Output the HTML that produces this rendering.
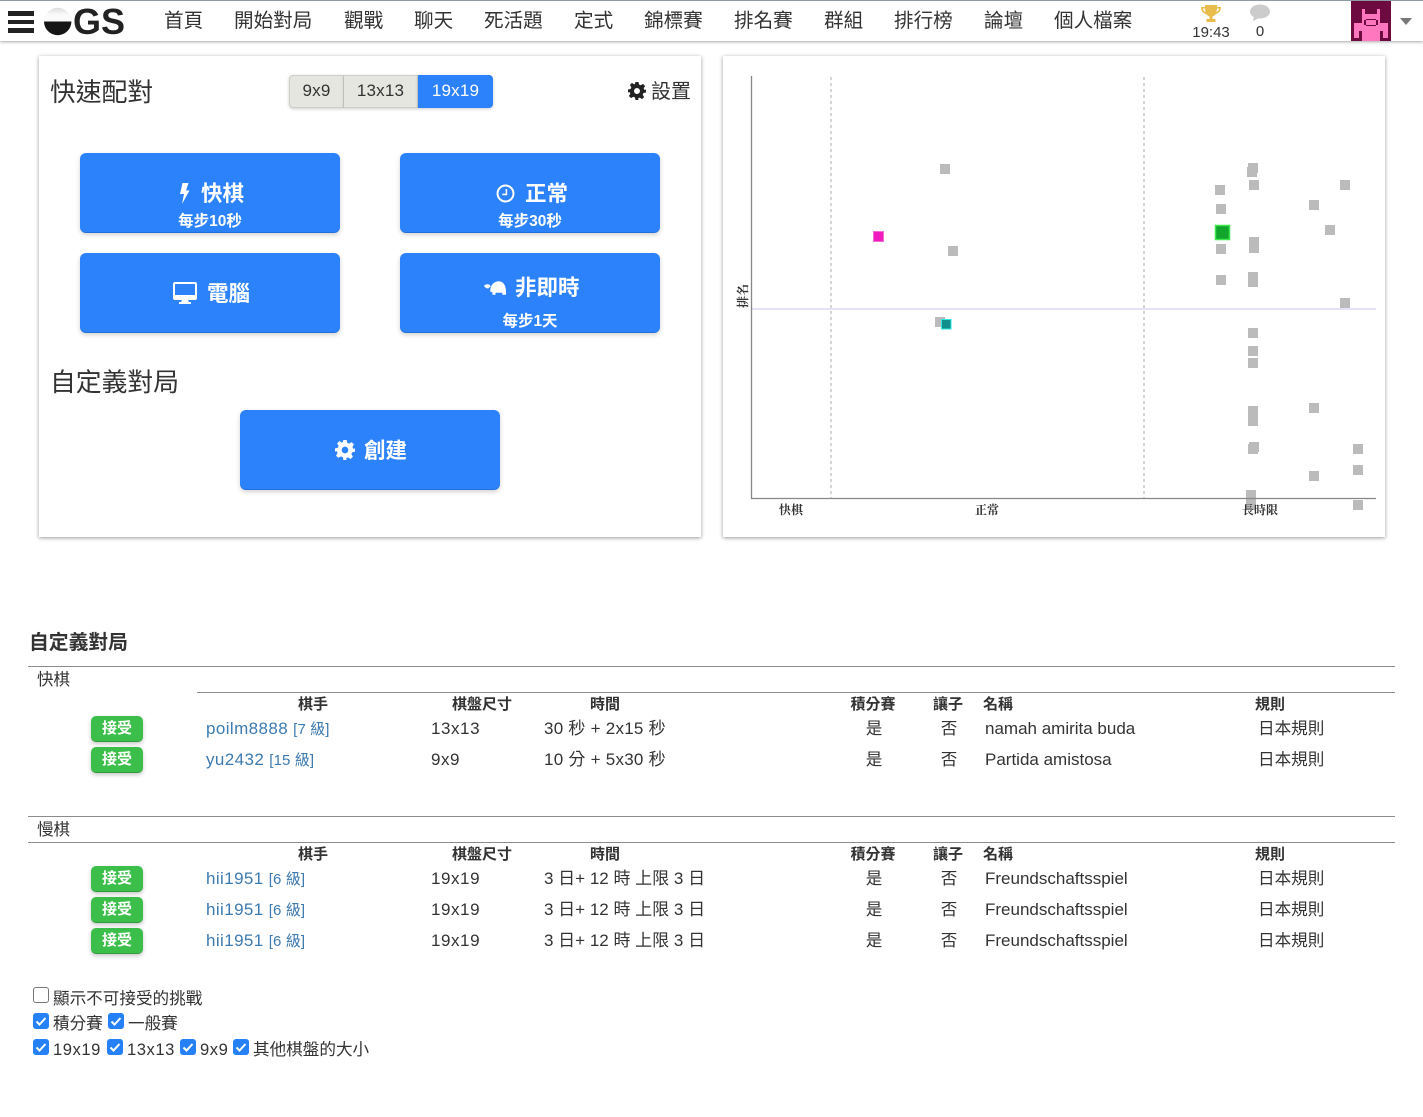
<!DOCTYPE html>
<html lang="zh-TW">
<head>
<meta charset="utf-8">
<title>OGS</title>
<style>
html,body{margin:0;padding:0;background:#fff;}
body{width:1423px;height:1117px;position:relative;overflow:hidden;font-family:"Liberation Sans","Noto Sans CJK TC",sans-serif;color:#333;}
.t{position:absolute;white-space:nowrap;line-height:20px;}
.c{transform:translateX(-50%);text-align:center;}
#hdr{position:absolute;left:0;top:0;width:1423px;height:41px;background:#fff;border-top:1px solid #8d9ca3;box-sizing:border-box;box-shadow:0 1px 3px rgba(0,0,0,.35);}
.nav{font-size:19.6px;top:11px;color:#333;}
.card{position:absolute;background:#fff;box-shadow:0 1px 4px rgba(0,0,0,.4);}
.btn{position:absolute;width:260px;height:80px;background:#2c82fb;border-radius:6px;border-bottom:1px solid #2470db;box-sizing:border-box;box-shadow:0 2px 5px rgba(0,0,0,.18);color:#fff;font-weight:bold;}
.btn .t{color:#fff;}
.seg{position:absolute;top:75px;height:33px;box-sizing:border-box;background:#e6e6e0;color:#333;font-size:17px;line-height:30px;text-align:center;border:1px solid #cfcfc8;box-shadow:0 1px 3px rgba(0,0,0,.2);letter-spacing:.2px;}
.hr{position:absolute;height:1px;background:#8c8c8c;}
.th{font-size:15px;font-weight:bold;color:#333;}
.td{font-size:17px;color:#333;}
.n{letter-spacing:.55px;}
.m{letter-spacing:.25px;}
.r{font-size:16.6px;}
.name{font-size:17px;color:#3d7ab0;letter-spacing:.4px;}
.name small{font-size:15px;letter-spacing:.1px;}
.ok{position:absolute;left:91px;width:52px;height:26px;background:#3cbf4a;border-radius:5px;border-bottom:1px solid #2f9a3b;box-sizing:border-box;color:#fff;font-size:15px;font-weight:bold;text-align:center;line-height:25px;box-shadow:0 2px 4px rgba(0,0,0,.22);}
.cb{position:absolute;width:16px;height:16px;border-radius:3px;background:#2680f8;}
.cb svg{display:block;}
.cb.off{background:#fff;border:1px solid #767676;box-sizing:border-box;}
</style>
</head>
<body>

<div id="hdr"></div>

<!-- hamburger -->
<div style="position:absolute;left:8px;top:11px;width:26px;height:5px;background:#222"></div>
<div style="position:absolute;left:8px;top:20px;width:26px;height:4px;background:#222"></div>
<div style="position:absolute;left:8px;top:28px;width:26px;height:5px;background:#222"></div>

<!-- logo -->
<svg style="position:absolute;left:43px;top:7px" width="30" height="30" viewBox="0 0 30 30">
<defs><linearGradient id="lg" x1="0" y1="0" x2="0" y2="1"><stop offset="0" stop-color="#dcdcdc"/><stop offset=".5" stop-color="#fafafa"/></linearGradient></defs>
<path d="M1 14.500a13.700 13.700 0 0 1 27.400 0z" fill="url(#lg)"/>
<path d="M1 14.500a13.700 13.700 0 0 0 27.400 0z" fill="#161616"/>
</svg>
<div class="t" style="left:73px;top:6px;font-size:36px;line-height:32px;font-weight:bold;color:#222;">GS</div>

<!-- nav -->
<div class="t nav" style="left:164px">首頁</div>
<div class="t nav" style="left:234px">開始對局</div>
<div class="t nav" style="left:344px">觀戰</div>
<div class="t nav" style="left:414px">聊天</div>
<div class="t nav" style="left:484px">死活題</div>
<div class="t nav" style="left:574px">定式</div>
<div class="t nav" style="left:644px">錦標賽</div>
<div class="t nav" style="left:734px">排名賽</div>
<div class="t nav" style="left:824px">群組</div>
<div class="t nav" style="left:894px">排行榜</div>
<div class="t nav" style="left:984px">論壇</div>
<div class="t nav" style="left:1054px">個人檔案</div>

<!-- trophy -->
<svg style="position:absolute;left:1200px;top:4px" width="22" height="19" viewBox="0 0 22 19">
<path d="M5 1h12v2h4c0 4-2 6-5 7-1 1.500-2.500 2-3.500 2.500V15h3v3H6.500v-3h3v-2.500C8.500 12 7 11.500 6 10 3 9 1 7 1 3h4z" fill="#e8bd4e"/>
<path d="M3 4.500h2l.5 3.500C4 7.500 3.200 6 3 4.500zM19 4.500h-2L16.500 8c1.500-.5 2.300-2 2.500-3.500z" fill="#fff"/>
</svg>
<div class="t c" style="left:1211px;top:23px;font-size:15px;color:#333">19:43</div>

<!-- chat -->
<svg style="position:absolute;left:1249px;top:4px" width="22" height="19" viewBox="0 0 22 19">
<ellipse cx="11" cy="7.500" rx="10" ry="7" fill="#ccc"/>
<path d="M5 12L4 17l6-3z" fill="#ccc"/>
</svg>
<div class="t c" style="left:1260px;top:22px;font-size:15px;color:#333">0</div>

<!-- avatar -->
<svg style="position:absolute;left:1351px;top:1px" width="40" height="40" viewBox="0 0 40 40" shape-rendering="crispEdges">
<rect width="40" height="40" fill="#6d0a40"/>
<path fill="#ff78bf" d="M11 8h3v5h12V8h3v10h-18zM11 18h18v8H11zM3 22h34v8H3zM3 30h5v7H3zM32 30h5v7h-5zM11 26h18v14H11z"/>
<path fill="#6d0a40" d="M15 18h10v1H15zM15 24h10v1H15zM13 19h2v5h-2zM25 19h2v5h-2z"/>
</svg>
<svg style="position:absolute;left:1400px;top:18px" width="12" height="7" viewBox="0 0 12 7"><path d="M0 0h12L6 7z" fill="#777"/></svg>

<!-- left card -->
<div class="card" style="left:39px;top:56px;width:662px;height:481px"></div>
<div class="t" style="left:50px;top:78px;font-size:25.800px;line-height:30px;color:#333">快速配對</div>

<div class="seg" style="left:289px;width:55px;border-radius:4px 0 0 4px">9x9</div>
<div class="seg" style="left:344px;width:74px;border-left:0">13x13</div>
<div class="seg" style="left:418px;width:75px;background:#2c82fb;color:#fff;border-color:#2c82fb;border-radius:0 4px 4px 0">19x19</div>

<svg style="position:absolute;left:628px;top:82px" width="18" height="18" viewBox="0 0 24 24">
<path fill="#222" fill-rule="evenodd" d="M10 0h4l.7 3.400 2.300 1 3-1.900 2.800 2.800-1.900 3 1 2.300L24 10v4l-3.400.7-1 2.300 1.900 3-2.800 2.800-3-1.900-2.300 1L14 24h-4l-.7-3.400-2.300-1-3 1.900-2.800-2.800 1.900-3-1-2.300L0 14v-4l3.400-.7 1-2.300-1.900-3L5.300 1.200l3 1.900 1-.7zM12 8a4 4 0 1 0 0 8 4 4 0 0 0 0-8z"/>
</svg>
<div class="t" style="left:651px;top:82px;font-size:20px;color:#333">設置</div>

<!-- buttons -->
<div class="btn" style="left:80px;top:153px">
  <svg style="position:absolute;left:99px;top:30px" width="11" height="21" viewBox="0 0 11 21"><path d="M3.500 0h6L7 7.500h3.500L3 21l2-10H1z" fill="#fff"/></svg>
  <div class="t" style="left:121px;top:28px;font-size:21.500px;line-height:26px">快棋</div>
  <div class="t c" style="left:130px;top:58px;font-size:15.500px;line-height:22px">每步10秒</div>
</div>
<div class="btn" style="left:400px;top:153px">
  <svg style="position:absolute;left:96px;top:31px" width="19" height="19" viewBox="0 0 21 21"><circle cx="10.500" cy="10.500" r="8.800" fill="none" stroke="#fff" stroke-width="2.200"/><path d="M11.500 5.500v6h-4.500" fill="none" stroke="#fff" stroke-width="1.800"/></svg>
  <div class="t" style="left:125px;top:28px;font-size:21.500px;line-height:26px">正常</div>
  <div class="t c" style="left:130px;top:58px;font-size:15.500px;line-height:22px">每步30秒</div>
</div>
<div class="btn" style="left:80px;top:253px">
  <svg style="position:absolute;left:93px;top:29px" width="24" height="22" viewBox="0 0 24 22"><path fill="#fff" fill-rule="evenodd" d="M2 0h20a2 2 0 0 1 2 2v14a2 2 0 0 1-2 2h-7l1 2h2v2H6v-2h2l1-2H2a2 2 0 0 1-2-2V2a2 2 0 0 1 2-2zM2 2v11h20V2z"/></svg>
  <div class="t" style="left:127px;top:28px;font-size:21.500px;line-height:26px">電腦</div>
</div>
<div class="btn" style="left:400px;top:253px">
  <svg style="position:absolute;left:84px;top:28px" width="22" height="14" viewBox="0 0 21 13"><path fill="#fff" d="M0 4.500C1 3 3.500 2.500 5 3.200L6.500 5 4 7C2 7 .8 5.800 0 4.500zM6 9c0-5 3.500-9 8-9s7 4 7 10v3h-3.500v-2h-6.500v2H8v-2.500L6 10z"/></svg>
  <div class="t" style="left:115px;top:22px;font-size:21.500px;line-height:26px">非即時</div>
  <div class="t c" style="left:130px;top:58px;font-size:15.500px;line-height:22px">每步1天</div>
</div>

<div class="t" style="left:50px;top:368px;font-size:25.800px;line-height:30px;color:#333">自定義對局</div>

<div class="btn" style="left:240px;top:410px">
  <svg style="position:absolute;left:95px;top:30px" width="20" height="20" viewBox="0 0 24 24">
  <path fill="#fff" fill-rule="evenodd" d="M10 0h4l.7 3.400 2.300 1 3-1.900 2.800 2.800-1.900 3 1 2.300L24 10v4l-3.400.7-1 2.300 1.900 3-2.800 2.800-3-1.900-2.300 1L14 24h-4l-.7-3.400-2.300-1-3 1.900-2.800-2.800 1.900-3-1-2.300L0 14v-4l3.400-.7 1-2.300-1.900-3L5.300 1.200l3 1.900 1-.7zM12 8a4 4 0 1 0 0 8 4 4 0 0 0 0-8z"/>
  </svg>
  <div class="t" style="left:124px;top:28px;font-size:21.500px;line-height:26px">創建</div>
</div>

<!-- right card with chart -->
<div class="card" style="left:723px;top:56px;width:662px;height:481px"></div>
<svg style="position:absolute;left:0;top:0" width="1423" height="540" viewBox="0 0 1423 540">
<g fill="#bbb">
<rect x="940" y="164" width="10" height="10"/>
<rect x="948" y="246" width="10" height="10"/>
<rect x="935" y="317" width="10" height="10"/>
<rect x="1248" y="163" width="10" height="10"/>
<rect x="1247" y="167" width="10" height="10"/>
<rect x="1249" y="180" width="10" height="10"/>
<rect x="1215" y="185" width="10" height="10"/>
<rect x="1216" y="204" width="10" height="10"/>
<rect x="1216" y="244" width="10" height="10"/>
<rect x="1249" y="237" width="10" height="10"/>
<rect x="1249" y="243" width="10" height="10"/>
<rect x="1216" y="275" width="10" height="10"/>
<rect x="1248" y="272" width="10" height="10"/>
<rect x="1248" y="277" width="10" height="10"/>
<rect x="1340" y="180" width="10" height="10"/>
<rect x="1309" y="200" width="10" height="10"/>
<rect x="1325" y="225" width="10" height="10"/>
<rect x="1340" y="298" width="10" height="10"/>
<rect x="1248" y="328" width="10" height="10"/>
<rect x="1248" y="346" width="10" height="10"/>
<rect x="1248" y="358" width="10" height="10"/>
<rect x="1248" y="406" width="10" height="10"/>
<rect x="1248" y="411" width="10" height="10"/>
<rect x="1248" y="416" width="10" height="10"/>
<rect x="1309" y="403" width="10" height="10"/>
<rect x="1249" y="442" width="10" height="10"/>
<rect x="1248" y="444" width="10" height="10"/>
<rect x="1353" y="444" width="10" height="10"/>
<rect x="1353" y="465" width="10" height="10"/>
<rect x="1309" y="471" width="10" height="10"/>
<rect x="1246" y="490" width="10" height="10"/>
<rect x="1246" y="500" width="10" height="10"/>
<rect x="1353" y="500" width="10" height="10"/>
</g>
<line x1="751" y1="309" x2="1376" y2="309" stroke="#dcd8f6" stroke-width="1.500"/>
<line x1="831" y1="77" x2="831" y2="499" stroke="#aaa" stroke-width="1" stroke-dasharray="3 3"/>
<line x1="1144" y1="77" x2="1144" y2="499" stroke="#aaa" stroke-width="1" stroke-dasharray="3 3"/>
<line x1="751.500" y1="76" x2="751.500" y2="499" stroke="#888" stroke-width="1.300"/>
<line x1="751" y1="498.500" x2="1376" y2="498.500" stroke="#888" stroke-width="1.300"/>
<rect x="873.500" y="231.500" width="10" height="10" fill="#f01cc0" stroke="#f56ad4"/>
<rect x="941.500" y="319.500" width="9.500" height="9.500" fill="#128f8c" stroke="#2fe6e0"/>
<rect x="1215.500" y="225.500" width="14" height="14" fill="#11a52c" stroke="#3ce84e" stroke-width="1.500"/>
<g font-family="'Liberation Serif','Noto Serif CJK SC',serif" font-size="12" font-weight="bold" fill="#333" text-anchor="middle">
<text x="791" y="514">快棋</text>
<text x="987" y="514">正常</text>
<text x="1260" y="514">長時限</text>
<text transform="translate(747,296) rotate(-90)">排名</text>
</g>
</svg>

<!-- challenges -->
<div class="t" style="left:29px;top:633px;font-size:19.800px;font-weight:bold;color:#333">自定義對局</div>

<div class="hr" style="left:28px;top:666px;width:1367px"></div>
<div class="t" style="left:37px;top:670px;font-size:16.500px">快棋</div>
<div class="hr" style="left:197px;top:692px;width:1198px"></div>

<div class="t c th" style="left:313px;top:695px">棋手</div>
<div class="t c th" style="left:482px;top:695px">棋盤尺寸</div>
<div class="t c th" style="left:605px;top:695px">時間</div>
<div class="t c th" style="left:873px;top:695px">積分賽</div>
<div class="t c th" style="left:948px;top:695px">讓子</div>
<div class="t th" style="left:983px;top:695px">名稱</div>
<div class="t th" style="left:1255px;top:695px">規則</div>

<div class="ok" style="top:716px">接受</div>
<div class="t name" style="left:206px;top:719px">poilm8888 <small>[7 級]</small></div>
<div class="t td n" style="left:431px;top:719px">13x13</div>
<div class="t td m" style="left:544px;top:719px">30 秒 + 2x15 秒</div>
<div class="t c td r" style="left:874px;top:719px">是</div>
<div class="t c td r" style="left:949px;top:719px">否</div>
<div class="t td" style="left:985px;top:719px">namah amirita buda</div>
<div class="t td r" style="left:1258px;top:719px">日本規則</div>

<div class="ok" style="top:747px">接受</div>
<div class="t name" style="left:206px;top:750px">yu2432 <small>[15 級]</small></div>
<div class="t td n" style="left:431px;top:750px">9x9</div>
<div class="t td m" style="left:544px;top:750px">10 分 + 5x30 秒</div>
<div class="t c td r" style="left:874px;top:750px">是</div>
<div class="t c td r" style="left:949px;top:750px">否</div>
<div class="t td" style="left:985px;top:750px">Partida amistosa</div>
<div class="t td r" style="left:1258px;top:750px">日本規則</div>

<div class="hr" style="left:28px;top:816px;width:1367px"></div>
<div class="t" style="left:37px;top:820px;font-size:16.500px">慢棋</div>
<div class="hr" style="left:28px;top:842px;width:1367px"></div>

<div class="t c th" style="left:313px;top:845px">棋手</div>
<div class="t c th" style="left:482px;top:845px">棋盤尺寸</div>
<div class="t c th" style="left:605px;top:845px">時間</div>
<div class="t c th" style="left:873px;top:845px">積分賽</div>
<div class="t c th" style="left:948px;top:845px">讓子</div>
<div class="t th" style="left:983px;top:845px">名稱</div>
<div class="t th" style="left:1255px;top:845px">規則</div>

<div class="ok" style="top:866px">接受</div>
<div class="t name" style="left:206px;top:869px">hii1951 <small>[6 級]</small></div>
<div class="t td n" style="left:431px;top:869px">19x19</div>
<div class="t td" style="left:544px;top:869px">3 日+ 12 時 上限 3 日</div>
<div class="t c td r" style="left:874px;top:869px">是</div>
<div class="t c td r" style="left:949px;top:869px">否</div>
<div class="t td" style="left:985px;top:869px">Freundschaftsspiel</div>
<div class="t td r" style="left:1258px;top:869px">日本規則</div>

<div class="ok" style="top:897px">接受</div>
<div class="t name" style="left:206px;top:900px">hii1951 <small>[6 級]</small></div>
<div class="t td n" style="left:431px;top:900px">19x19</div>
<div class="t td" style="left:544px;top:900px">3 日+ 12 時 上限 3 日</div>
<div class="t c td r" style="left:874px;top:900px">是</div>
<div class="t c td r" style="left:949px;top:900px">否</div>
<div class="t td" style="left:985px;top:900px">Freundschaftsspiel</div>
<div class="t td r" style="left:1258px;top:900px">日本規則</div>

<div class="ok" style="top:928px">接受</div>
<div class="t name" style="left:206px;top:931px">hii1951 <small>[6 級]</small></div>
<div class="t td n" style="left:431px;top:931px">19x19</div>
<div class="t td" style="left:544px;top:931px">3 日+ 12 時 上限 3 日</div>
<div class="t c td r" style="left:874px;top:931px">是</div>
<div class="t c td r" style="left:949px;top:931px">否</div>
<div class="t td" style="left:985px;top:931px">Freundschaftsspiel</div>
<div class="t td r" style="left:1258px;top:931px">日本規則</div>

<!-- filters -->
<div class="cb off" style="left:33px;top:987px"></div>
<div class="t" style="left:53px;top:989px;font-size:16.600px">顯示不可接受的挑戰</div>

<div class="cb" style="left:33px;top:1013px"><svg width="16" height="16" viewBox="0 0 16 16"><path d="M3.500 8.500l3 3 6-6.500" fill="none" stroke="#fff" stroke-width="2"/></svg></div>
<div class="t" style="left:53px;top:1014px;font-size:16.600px">積分賽</div>
<div class="cb" style="left:108px;top:1013px"><svg width="16" height="16" viewBox="0 0 16 16"><path d="M3.500 8.500l3 3 6-6.500" fill="none" stroke="#fff" stroke-width="2"/></svg></div>
<div class="t" style="left:128px;top:1014px;font-size:16.600px">一般賽</div>

<div class="cb" style="left:33px;top:1039px"><svg width="16" height="16" viewBox="0 0 16 16"><path d="M3.500 8.500l3 3 6-6.500" fill="none" stroke="#fff" stroke-width="2"/></svg></div>
<div class="t n" style="left:53px;top:1040px;font-size:16.600px">19x19</div>
<div class="cb" style="left:107px;top:1039px"><svg width="16" height="16" viewBox="0 0 16 16"><path d="M3.500 8.500l3 3 6-6.500" fill="none" stroke="#fff" stroke-width="2"/></svg></div>
<div class="t n" style="left:127px;top:1040px;font-size:16.600px">13x13</div>
<div class="cb" style="left:180px;top:1039px"><svg width="16" height="16" viewBox="0 0 16 16"><path d="M3.500 8.500l3 3 6-6.500" fill="none" stroke="#fff" stroke-width="2"/></svg></div>
<div class="t n" style="left:200px;top:1040px;font-size:16.600px">9x9</div>
<div class="cb" style="left:233px;top:1039px"><svg width="16" height="16" viewBox="0 0 16 16"><path d="M3.500 8.500l3 3 6-6.500" fill="none" stroke="#fff" stroke-width="2"/></svg></div>
<div class="t" style="left:253px;top:1040px;font-size:16.600px">其他棋盤的大小</div>

</body>
</html>
